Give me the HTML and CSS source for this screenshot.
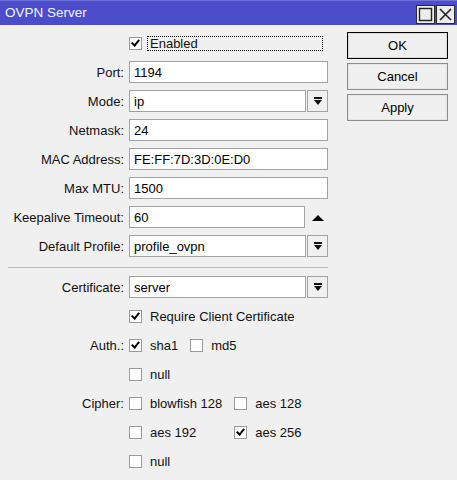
FILE: index.html
```html
<!DOCTYPE html>
<html lang="en">
<head>
<meta charset="utf-8">
<title>OVPN Server</title>
<link rel="stylesheet" href="styles.css">
</head>
<body>
<div class="window">
  <div class="titlebar">
    <span class="title">OVPN Server</span>
    <div class="tb-buttons">
      <span class="tb-btn">
        <svg width="17" height="17" viewBox="0 0 17 17"><rect x="2.5" y="2.5" width="12" height="12" fill="none" stroke="#222" stroke-width="1.4"/></svg>
      </span>
      <span class="tb-btn">
        <svg width="17" height="17" viewBox="0 0 17 17"><path d="M3 3 L14 14 M14 3 L3 14" stroke="#222" stroke-width="1.6" fill="none"/></svg>
      </span>
    </div>
  </div>

  <div class="content">
    <div class="form">
      <div class="label"></div>
      <div class="field">
        <span class="check on"></span>
        <span class="check-text focus">Enabled</span>
      </div>

      <div class="label">Port:</div>
      <div class="field"><span class="input">1194</span></div>

      <div class="label">Mode:</div>
      <div class="field"><span class="input">ip</span><span class="drop"></span></div>

      <div class="label">Netmask:</div>
      <div class="field"><span class="input">24</span></div>

      <div class="label">MAC Address:</div>
      <div class="field"><span class="input">FE:FF:7D:3D:0E:D0</span></div>

      <div class="label">Max MTU:</div>
      <div class="field"><span class="input">1500</span></div>

      <div class="label">Keepalive Timeout:</div>
      <div class="field"><span class="input">60</span><span class="spin"></span></div>

      <div class="label">Default Profile:</div>
      <div class="field"><span class="input">profile_ovpn</span><span class="drop"></span></div>

      <div class="separator"></div>

      <div class="label">Certificate:</div>
      <div class="field"><span class="input">server</span><span class="drop"></span></div>

      <div class="label"></div>
      <div class="field">
        <span class="check on"></span>
        <span class="check-text">Require Client Certificate</span>
      </div>

      <div class="label top">Auth.:</div>
      <div class="options">
        <div class="opt"><span class="check on"></span><span class="check-text">sha1</span></div>
        <div class="opt"><span class="check"></span><span class="check-text">md5</span></div>
        <div class="opt"><span class="check"></span><span class="check-text">null</span></div>
      </div>

      <div class="label top">Cipher:</div>
      <div class="options">
        <div class="opt"><span class="check"></span><span class="check-text">blowfish 128</span></div>
        <div class="opt"><span class="check"></span><span class="check-text">aes 128</span></div>
        <div class="opt"><span class="check"></span><span class="check-text">aes 192</span></div>
        <div class="opt"><span class="check on"></span><span class="check-text">aes 256</span></div>
        <div class="opt"><span class="check"></span><span class="check-text">null</span></div>
      </div>
    </div>

    <div class="actions">
      <button class="btn default">OK</button>
      <button class="btn">Cancel</button>
      <button class="btn">Apply</button>
    </div>
  </div>
</div>
</body>
</html>
```

FILE: styles.css
```css
html, body {
  margin: 0;
  padding: 0;
  background: #f0f0f0;
}

body {
  font-family: "Liberation Sans", Arial, sans-serif;
  font-size: 13px;
  color: #000;
}

.window {
  width: 457px;
  height: 480px;
  background: #f0f0f0;
  overflow: hidden;
}

/* ---- title bar ---- */
.titlebar {
  height: 25px;
  box-sizing: border-box;
  background: #4b4dcb;
  border-top: 1px solid #7072d8;
  display: flex;
  align-items: center;
  justify-content: space-between;
  padding: 0 2px 0 5px;
}

.title {
  color: #f4f4ff;
  font-size: 13.5px;
  margin-top: -1px;
}

.tb-buttons {
  display: flex;
  gap: 1px;
  margin-top: 2px;
}

.tb-btn {
  width: 19px;
  height: 19px;
  box-sizing: border-box;
  background: #ececec;
  border: 1px solid #2a2a2a;
  display: flex;
  align-items: center;
  justify-content: center;
}

/* ---- body ---- */
.content {
  display: flex;
  padding: 7px 0 0 8px;
  gap: 19px;
}

.form {
  display: grid;
  grid-template-columns: 116px 199px;
  column-gap: 5px;
  row-gap: 7px;
  grid-auto-rows: auto;
  align-content: start;
}

.label {
  display: flex;
  align-items: center;
  justify-content: flex-end;
  height: 22px;
  white-space: nowrap;
  color: #111;
}

.label.top {
  align-self: start;
}

.field {
  display: flex;
  align-items: center;
  height: 22px;
}

.input {
  flex: 1;
  height: 22px;
  box-sizing: border-box;
  background: #fff;
  border: 1px solid #a3a3a3;
  padding: 0 4px;
  display: flex;
  align-items: center;
  color: #000;
}

/* dropdown button: bar above a down triangle */
.drop {
  width: 21px;
  height: 22px;
  box-sizing: border-box;
  margin-left: 1px;
  border: 1px solid #a3a3a3;
  background: #f0f0f0;
  position: relative;
}

.drop::before {
  content: "";
  position: absolute;
  left: 6px;
  top: 6px;
  width: 8px;
  height: 2px;
  background: #111;
}

.drop::after {
  content: "";
  position: absolute;
  left: 6px;
  top: 9px;
  border-left: 4px solid transparent;
  border-right: 4px solid transparent;
  border-top: 5px solid #111;
}

/* spin control: up triangle */
.spin {
  width: 23px;
  height: 22px;
  position: relative;
}

.spin::after {
  content: "";
  position: absolute;
  left: 7px;
  top: 9px;
  border-left: 6px solid transparent;
  border-right: 6px solid transparent;
  border-bottom: 6px solid #000;
}

.separator {
  grid-column: 1 / 3;
  height: 5px;
  position: relative;
}

.separator::after {
  content: "";
  position: absolute;
  left: 0;
  right: 0;
  top: 3px;
  height: 1px;
  background: #bcbcbc;
}

/* ---- checkboxes ---- */
.check {
  width: 13px;
  height: 13px;
  box-sizing: border-box;
  flex: none;
  background: #fff;
  border: 1px solid #9a9a9a;
  position: relative;
}

.check.on::after {
  content: "";
  position: absolute;
  left: 3px;
  top: 0px;
  width: 3px;
  height: 6px;
  border-right: 2px solid #000;
  border-bottom: 2px solid #000;
  transform: rotate(40deg);
}

.check-text {
  margin-left: 8px;
  white-space: nowrap;
  color: #111;
}

.check-text.focus {
  flex: 1;
  margin-left: 5px;
  margin-right: 5px;
  padding: 0 2px;
  height: 15px;
  line-height: 14px;
  box-sizing: border-box;
  border: 1px dotted #000;
}

.options {
  display: grid;
  grid-template-columns: auto auto;
  justify-content: start;
  column-gap: 12px;
  row-gap: 7px;
  grid-auto-rows: 22px;
}

.opt {
  display: flex;
  align-items: center;
}

/* ---- action buttons ---- */
.actions {
  display: flex;
  flex-direction: column;
  gap: 4px;
  width: 101px;
}

.btn {
  height: 27px;
  box-sizing: border-box;
  font-family: inherit;
  font-size: 13px;
  color: #000;
  background: #f0f0f0;
  border: 1px solid #8c8c8c;
  box-shadow: inset 0 0 0 1px #e6e6e6;
  padding: 0;
}

.btn.default {
  border: 1px solid #000;
  box-shadow: inset 0 0 0 1px #d8d8d8;
}
```
